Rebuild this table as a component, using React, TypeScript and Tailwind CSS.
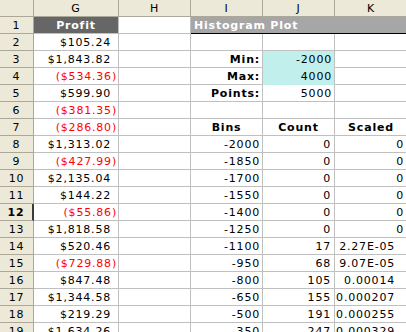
const font = { fontFamily: '"DejaVu Sans", Verdana, sans-serif' };

type Row = {
  profit: string;
  i?: string;
  j?: string;
  k?: string;
  kind?: 'label' | 'head' | 'data' | 'blank';
  cyan?: boolean;
};

const rows: Row[] = [
  { profit: '$105.24', kind: 'blank' },
  { profit: '$1,843.82', i: 'Min:', j: '-2000', kind: 'label', cyan: true },
  { profit: '($534.36)', i: 'Max:', j: '4000', kind: 'label', cyan: true },
  { profit: '$599.90', i: 'Points:', j: '5000', kind: 'label' },
  { profit: '($381.35)', kind: 'blank' },
  { profit: '($286.80)', i: 'Bins', j: 'Count', k: 'Scaled', kind: 'head' },
  { profit: '$1,313.02', i: '-2000', j: '0', k: '0', kind: 'data' },
  { profit: '($427.99)', i: '-1850', j: '0', k: '0', kind: 'data' },
  { profit: '$2,135.04', i: '-1700', j: '0', k: '0', kind: 'data' },
  { profit: '$144.22', i: '-1550', j: '0', k: '0', kind: 'data' },
  { profit: '($55.86)', i: '-1400', j: '0', k: '0', kind: 'data' },
  { profit: '$1,818.58', i: '-1250', j: '0', k: '0', kind: 'data' },
  { profit: '$520.46', i: '-1100', j: '17', k: '2.27E-05', kind: 'data' },
  { profit: '($729.88)', i: '-950', j: '68', k: '9.07E-05', kind: 'data' },
  { profit: '$847.48', i: '-800', j: '105', k: '0.00014', kind: 'data' },
  { profit: '$1,344.58', i: '-650', j: '155', k: '0.000207', kind: 'data' },
  { profit: '$219.29', i: '-500', j: '191', k: '0.000255', kind: 'data' },
  { profit: '$1,634.26', i: '-350', j: '247', k: '0.000329', kind: 'data' },
];

const cell = 'h-[17px] border-r border-b border-[#c0c0c0] leading-[17px] whitespace-nowrap overflow-hidden';
const hdr = 'h-[17px] bg-[#ece9d8] border-r border-b border-[#aca899] text-center leading-[17px]';

function RowHeader({ n, active }: { n: number; active?: boolean }) {
  return (
    <div className={`${hdr} ${active ? 'font-bold border-r-2 border-r-[#3c3c3c]' : ''}`}>{n}</div>
  );
}

export default function App() {
  return (
    <div
      className="w-[406px] h-[332px] overflow-hidden bg-white text-[11px] tracking-[0.8px] text-black"
      style={font}
    >
      <div className="grid grid-cols-[34px_85px_72px_72px_72px_73px] auto-rows-[17px]">
        {/* column headers */}
        <div className={hdr} />
        {['G', 'H', 'I', 'J', 'K'].map((c) => (
          <div key={c} className={hdr}>
            {c}
          </div>
        ))}

        {/* row 1 */}
        <RowHeader n={1} />
        <div className={`${cell} bg-[#666666] text-white font-bold text-center`}>Profit</div>
        <div className={cell} />
        <div className="col-span-3 h-[17px] bg-[#a6a6a6] border-b border-black text-white font-bold pl-[3px] leading-[17px]">
          Histogram Plot
        </div>

        {rows.map((r, idx) => {
          const n = idx + 2;
          const neg = r.profit.startsWith('(');
          return (
            <div key={n} className="contents">
              <RowHeader n={n} active={n === 12} />
              <div className={`${cell} text-right ${neg ? 'text-[#ff0000] pr-[1px]' : 'pr-[7px]'}`}>
                {r.profit}
              </div>
              <div className={cell} />
              {r.kind === 'blank' && (
                <>
                  <div className={cell} />
                  <div className={cell} />
                  <div className={cell} />
                </>
              )}
              {r.kind === 'label' && (
                <>
                  <div className={`${cell} text-right font-bold pr-[2px]`}>{r.i}</div>
                  <div
                    className={`${cell} text-right pr-[2px] ${
                      r.cyan ? 'bg-[#c0efec] border-[#c0efec] border-r-[#c0c0c0]' : ''
                    }`}
                  >
                    {r.j}
                  </div>
                  <div className={cell} />
                </>
              )}
              {r.kind === 'head' && (
                <>
                  <div className={`${cell} text-center font-bold`}>{r.i}</div>
                  <div className={`${cell} text-center font-bold`}>{r.j}</div>
                  <div className={`${cell} text-center font-bold`}>{r.k}</div>
                </>
              )}
              {r.kind === 'data' && (
                <>
                  <div className={`${cell} text-right pr-[2px]`}>{r.i}</div>
                  <div className={`${cell} text-right pr-[3px]`}>{r.j}</div>
                  <div className={`${cell} text-right ${r.k === '0' ? 'pr-[3px]' : 'pr-[12px]'}`}>{r.k}</div>
                </>
              )}
            </div>
          );
        })}
      </div>
    </div>
  );
}
